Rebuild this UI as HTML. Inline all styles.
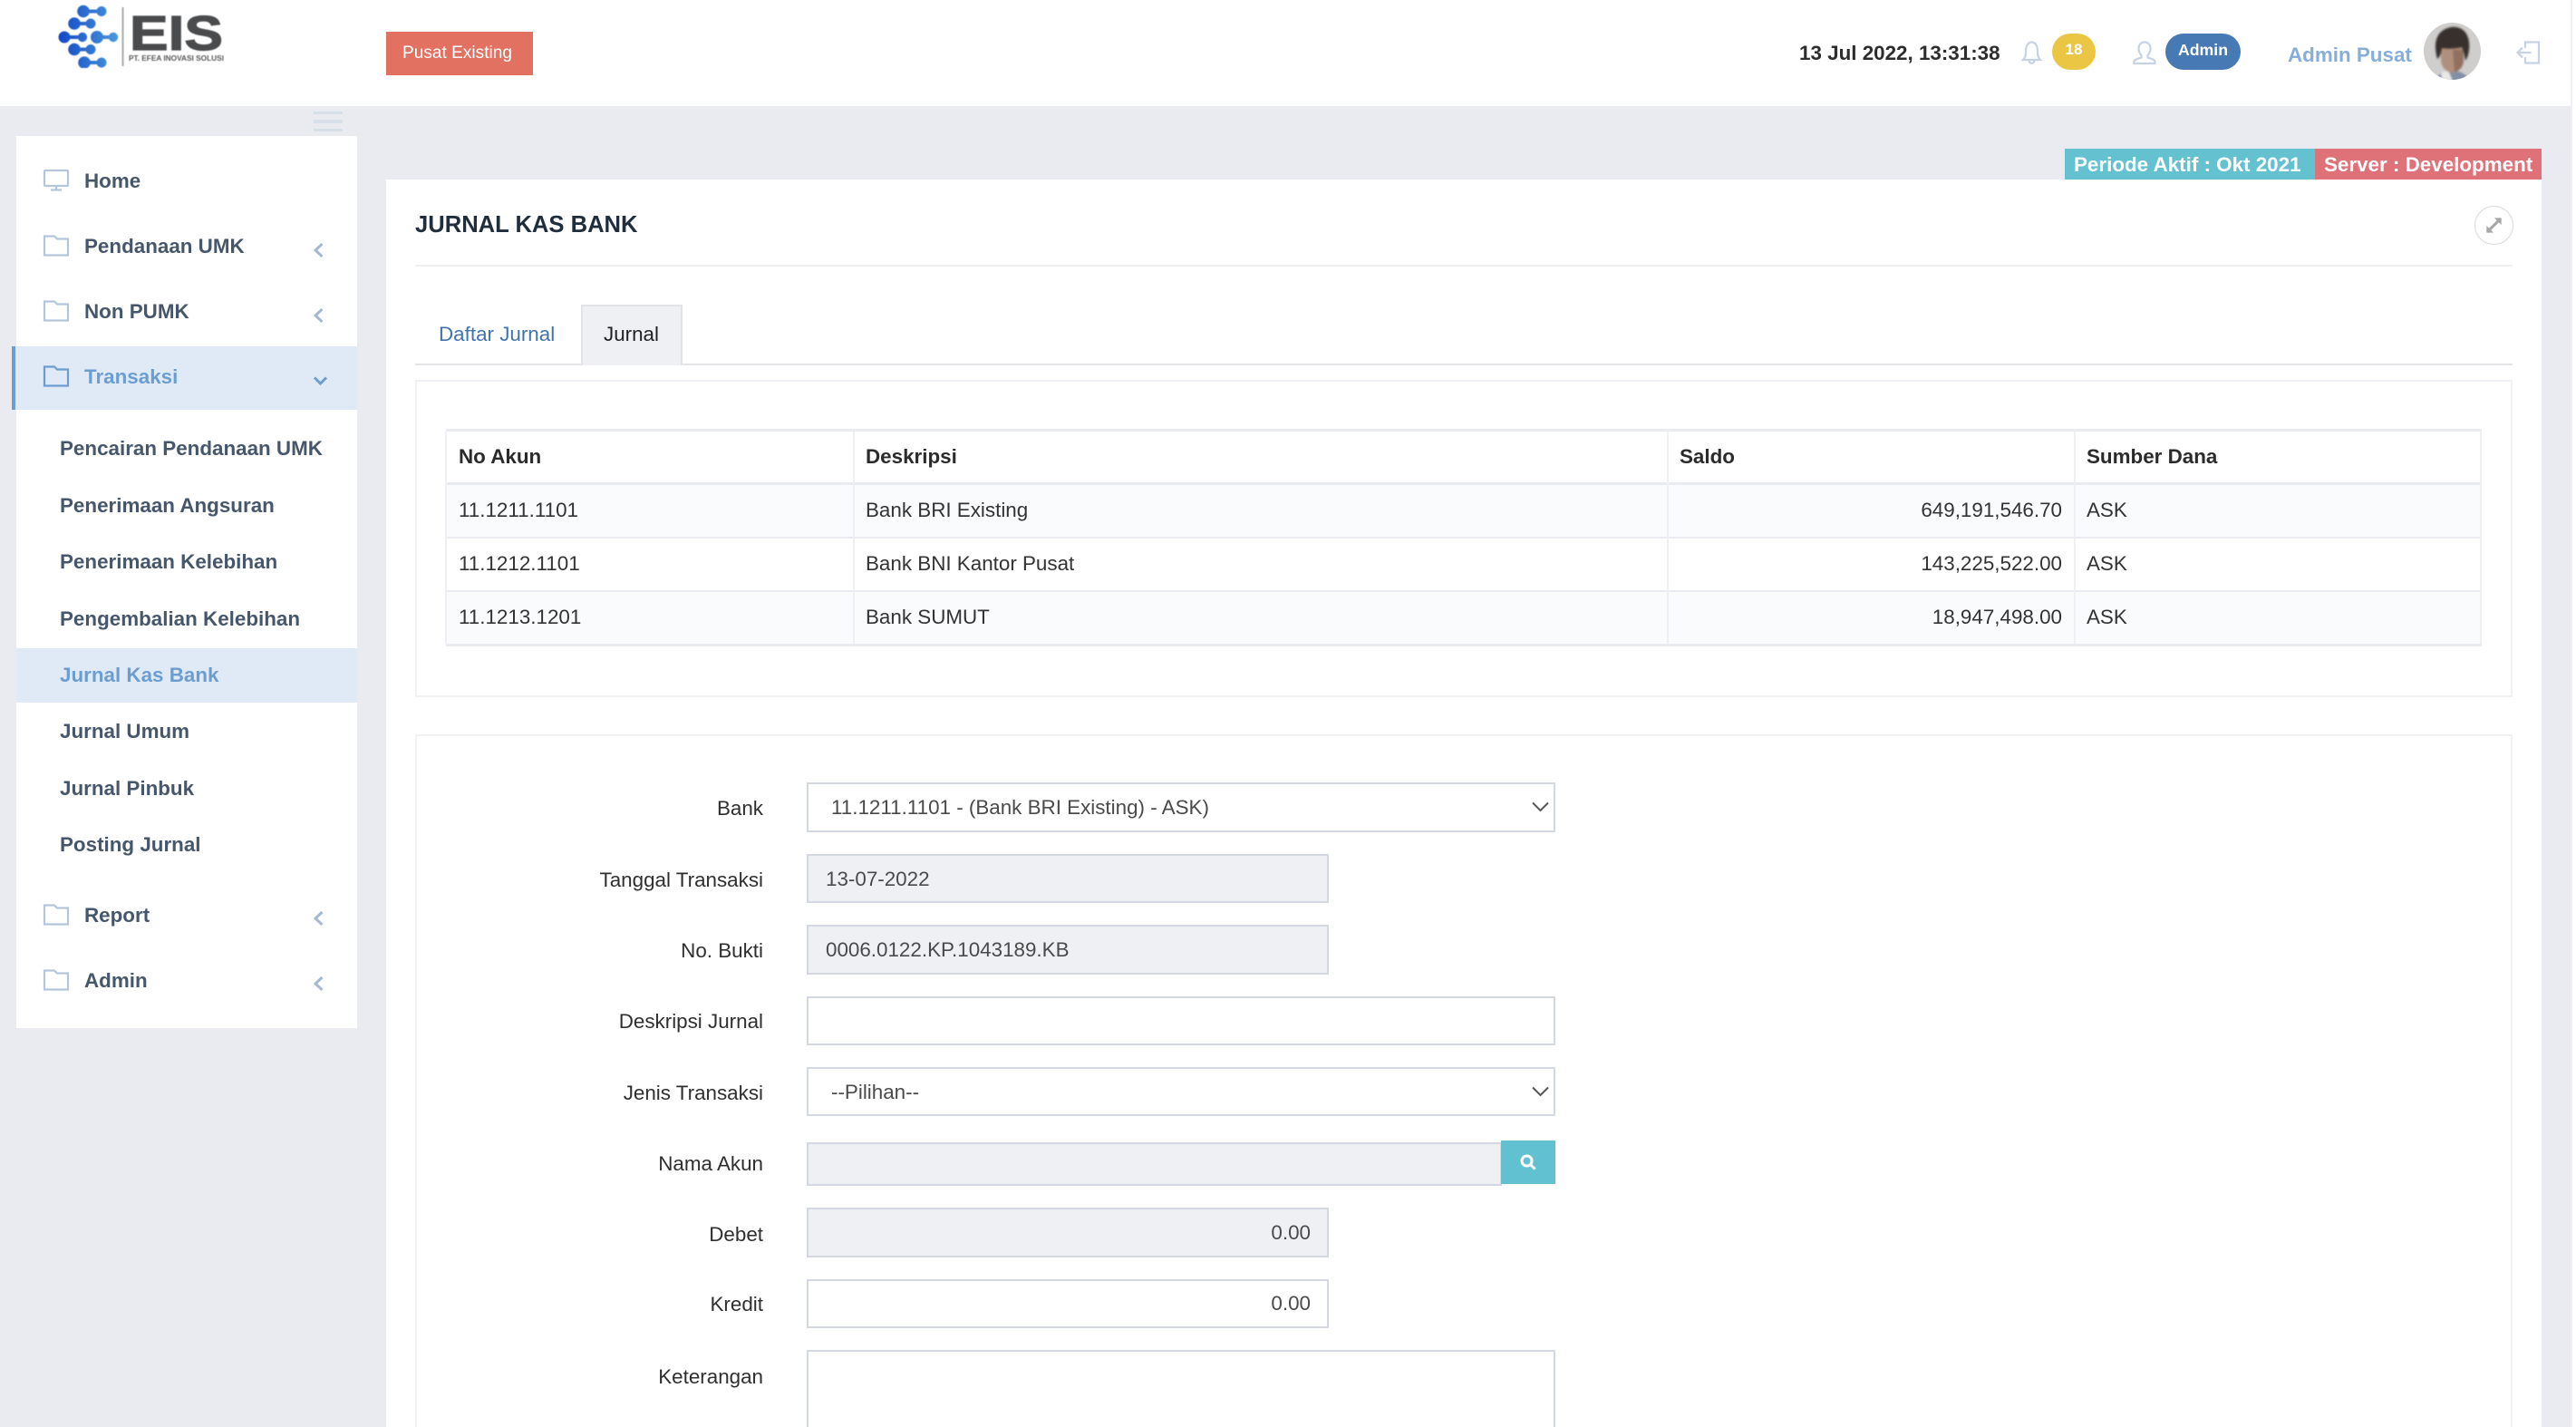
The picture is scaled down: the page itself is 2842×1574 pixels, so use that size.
<!DOCTYPE html>
<html lang="id"><head><meta charset="utf-8"><title>Jurnal Kas Bank</title>
<style>
*{box-sizing:border-box}
html,body{margin:0;padding:0;width:2842px;height:1574px;overflow:hidden}
body{background:#fff;position:relative;font-family:"Liberation Sans",Arial,sans-serif;font-size:22.4px;color:#333}
#root{position:absolute;left:0;top:0;width:2842px;height:1574px;overflow:hidden}
.a{position:absolute}
.t{position:absolute;white-space:nowrap;line-height:30px;height:30px;margin-top:1px}
.b{font-weight:700}
.m{color:#47576b;font-weight:700}
.l{color:#2f2f2f;text-align:right;right:2000px}
.f{position:absolute;left:890px;border:2px solid #d3d8e2;background:#fff}
.ro{background:#eff0f4}
.v{color:#4a4a4a}
svg{position:absolute;overflow:visible}
.ic{fill:none;stroke:#c5d3e4;stroke-width:2.2}
.mi{fill:none;stroke:#b5c6da;stroke-width:2.2}
.ch{fill:none;stroke:#a5bad2;stroke-width:3}
.hl{position:absolute;background:#e9ebf0}
.vl{position:absolute;background:#eef0f4;width:2px;top:475px;height:235px}
</style></head><body><div id="root">

<!-- page background and header -->
<div class="a" style="left:0;top:117px;width:2836px;height:1457px;background:#e9ebf0"></div>
<div class="a" style="left:0;top:0;width:2836px;height:117px;background:#fff"></div>
<div class="a" style="left:2836px;top:0;width:2px;height:1574px;background:#f0f0f3"></div>

<!-- logo -->
<svg style="left:0;top:0;filter:blur(.5px)" width="260" height="80" viewBox="0 0 260 80">
<defs>
<linearGradient id="g" gradientUnits="userSpaceOnUse" x1="65" y1="0" x2="132" y2="0"><stop offset="0" stop-color="#1448c6"/><stop offset="1" stop-color="#4b9bdb"/></linearGradient>
<clipPath id="c"><rect x="60" y="5" width="75" height="70"/></clipPath>
</defs>
<g clip-path="url(#c)" fill="url(#g)" stroke="none">
<circle cx="92" cy="12.5" r="6.800"/><rect x="92" y="10.500" width="20" height="4"/><circle cx="112" cy="12.5" r="5.500"/>
<circle cx="82" cy="26" r="6.800"/><rect x="82" y="24" width="18" height="4"/><circle cx="100" cy="26" r="5.500"/>
<circle cx="71" cy="41" r="6.500"/><rect x="71" y="39" width="20" height="4"/><circle cx="91" cy="41" r="5.200"/>
<circle cx="107" cy="41" r="7"/><rect x="107" y="39" width="18" height="4"/><circle cx="125" cy="41" r="5.200"/>
<circle cx="82" cy="54.500" r="6.800"/><rect x="82" y="52.500" width="18" height="4"/><circle cx="100" cy="54.500" r="5.500"/>
<circle cx="93" cy="69" r="6.800"/><rect x="93" y="67" width="19" height="4"/><circle cx="112" cy="69" r="5.500"/>
</g>
<rect x="134.500" y="8" width="2" height="65" fill="#a9a9a9"/>
<text x="143" y="55" font-family="Liberation Sans" font-weight="700" font-size="54" fill="#4a4b4d" stroke="#4a4b4d" stroke-width="1.200" textLength="103" lengthAdjust="spacingAndGlyphs">EIS</text>
<text x="142" y="67" font-family="Liberation Sans" font-weight="700" font-size="7.800" fill="#55565a" textLength="105" lengthAdjust="spacingAndGlyphs">PT. EFEA INOVASI SOLUSI</text>
</svg>

<div class="a" style="left:426px;top:35px;width:162px;height:48px;background:#e27161"></div>
<div class="t" style="left:444px;top:43px;color:#fff;font-size:19.100px">Pusat Existing</div>

<div class="t b" style="left:1985px;top:43px;color:#2d2d2d">13 Jul 2022, 13:31:38</div>

<!-- bell -->
<svg class="ic" style="left:2230px;top:45px" width="24" height="26" viewBox="0 0 24 26"><path d="M2 21c2.500-2.500 3-5 3-9C5 5.500 7.500 1.500 11.500 1.500S18 5.500 18 12c0 4 .5 6.500 3 9zM8.500 21.500c0 2 1.300 3.300 3 3.300s3-1.300 3-3.300"/></svg>
<div class="a" style="left:2264px;top:37px;width:48px;height:40px;background:#ebc645;border-radius:20px"></div>
<div class="t b" style="left:2264px;width:48px;text-align:center;top:39px;color:#fff;font-size:17px">18</div>

<!-- user -->
<svg class="ic" style="left:2353px;top:45px" width="26" height="26" viewBox="0 0 26 26"><path d="M13 1.500c-4 0-6.500 3-6.500 7 0 3.500 1.500 6 3 7.500v2.500c-3.500 1.500-8 2-8 4.500v2h23v-2c0-2.500-4.500-3-8-4.500V16c1.500-1.500 3-4 3-7.500 0-4-2.500-7-6.500-7z"/></svg>
<div class="a" style="left:2389px;top:37px;width:83px;height:40px;background:#4779b4;border-radius:20px"></div>
<div class="t b" style="left:2389px;width:83px;text-align:center;top:39px;color:#fff;font-size:17.700px">Admin</div>

<div class="t b" style="left:2524px;top:45px;color:#86aed9">Admin Pusat</div>

<!-- avatar -->
<svg style="left:2674px;top:25px" width="64" height="64" viewBox="0 0 64 64">
<defs><clipPath id="av"><circle cx="31.500" cy="31.500" r="31.500"/></clipPath></defs>
<g clip-path="url(#av)">
<rect width="64" height="64" fill="#cfcecc"/>
<g style="filter:blur(1px)">
<path d="M13 66c1-9 9-13 18-13s18 4 20 13z" fill="#838fa5"/>
<path d="M19 55l8-3 5 12h-12z" fill="#e9e7e6"/>
<path d="M19 27h25v14c0 8-6 14-12.500 14S19 49 19 41z" fill="#b0907d"/>
<path d="M32 30h12v12c0 6-5 12-10 12z" fill="#7d5c4d" opacity=".6"/>
<path d="M15 40C10 22 14 8 30 5c14-2 22 9 20 25-1 8-3 10-4 12-1-6-2-12-4-15-8 2-16 2-22 1-1 6-2 10-5 12z" fill="#37302c"/>
</g>
</g></svg>

<!-- logout -->
<svg class="ic" style="left:2776px;top:45px" width="26" height="26" viewBox="0 0 26 26"><path d="M10 8V1.500h15v23H10V18M1.500 13h15M7 7.500 1.500 13 7 18.500"/></svg>

<!-- hamburger -->
<div class="a" style="left:346px;top:123px;width:32px;height:3px;background:#d7dfe9"></div>
<div class="a" style="left:346px;top:132px;width:32px;height:4px;background:#d7dfe9"></div>
<div class="a" style="left:346px;top:142px;width:32px;height:3px;background:#d7dfe9"></div>

<!-- sidebar -->
<div class="a" style="left:18px;top:150px;width:376px;height:984px;background:#fff"></div>
<div class="a" style="left:17px;top:382px;width:377px;height:70px;background:#e0e9f6"></div>
<div class="a" style="left:13px;top:382px;width:4px;height:70px;background:#6b9dd1"></div>
<div class="a" style="left:18px;top:715px;width:376px;height:60px;background:#e0e9f6"></div>

<svg class="mi" style="left:48px;top:187px" width="28" height="24" viewBox="0 0 28 24"><rect x="1" y="1" width="26" height="17" rx="1"/><path d="M14 18v4M8 22.500h12"/></svg>
<div class="t m" style="left:93px;top:184px">Home</div>

<svg class="mi" style="left:48px;top:259px" width="28" height="24" viewBox="0 0 28 24"><path d="M1 22V1.500h11l3 3h12V22.500H1z"/></svg>
<div class="t m" style="left:93px;top:256px">Pendanaan UMK</div>
<svg class="ch" style="left:346px;top:268px" width="11" height="16" viewBox="0 0 11 16"><path d="M9.500 1 2 8l7.500 7"/></svg>

<svg class="mi" style="left:48px;top:331px" width="28" height="24" viewBox="0 0 28 24"><path d="M1 22V1.500h11l3 3h12V22.500H1z"/></svg>
<div class="t m" style="left:93px;top:328px">Non PUMK</div>
<svg class="ch" style="left:346px;top:340px" width="11" height="16" viewBox="0 0 11 16"><path d="M9.500 1 2 8l7.500 7"/></svg>

<svg style="left:48px;top:403px;fill:none;stroke:#6b9dd1;stroke-width:2.200" width="28" height="24" viewBox="0 0 28 24"><path d="M1 22V1.500h11l3 3h12V22.500H1z"/></svg>
<div class="t b" style="left:93px;top:400px;color:#6b9dd1">Transaksi</div>
<svg style="left:346px;top:415px;fill:none;stroke:#6b9dd1;stroke-width:3" width="15" height="10" viewBox="0 0 15 10"><path d="M1 1.500 7.500 8 14 1.500"/></svg>

<div class="t m" style="left:66px;top:479px">Pencairan Pendanaan UMK</div>
<div class="t m" style="left:66px;top:542px">Penerimaan Angsuran</div>
<div class="t m" style="left:66px;top:604px">Penerimaan Kelebihan</div>
<div class="t m" style="left:66px;top:667px">Pengembalian Kelebihan</div>
<div class="t b" style="left:66px;top:729px;color:#6b9dd1">Jurnal Kas Bank</div>
<div class="t m" style="left:66px;top:791px">Jurnal Umum</div>
<div class="t m" style="left:66px;top:854px">Jurnal Pinbuk</div>
<div class="t m" style="left:66px;top:916px">Posting Jurnal</div>

<svg class="mi" style="left:48px;top:997px" width="28" height="24" viewBox="0 0 28 24"><path d="M1 22V1.500h11l3 3h12V22.500H1z"/></svg>
<div class="t m" style="left:93px;top:994px">Report</div>
<svg class="ch" style="left:346px;top:1005px" width="11" height="16" viewBox="0 0 11 16"><path d="M9.500 1 2 8l7.500 7"/></svg>

<svg class="mi" style="left:48px;top:1069px" width="28" height="24" viewBox="0 0 28 24"><path d="M1 22V1.500h11l3 3h12V22.500H1z"/></svg>
<div class="t m" style="left:93px;top:1066px">Admin</div>
<svg class="ch" style="left:346px;top:1077px" width="11" height="16" viewBox="0 0 11 16"><path d="M9.500 1 2 8l7.500 7"/></svg>

<!-- main card -->
<div class="a" style="left:426px;top:198px;width:2378px;height:1376px;background:#fff"></div>
<div class="a" style="left:2278px;top:164px;width:276px;height:34px;background:#64c2d0"></div>
<div class="a" style="left:2554px;top:164px;width:250px;height:34px;background:#de7278"></div>
<div class="t b" style="left:2288px;top:166px;color:#fff">Periode Aktif : Okt 2021</div>
<div class="t b" style="left:2564px;top:166px;color:#fff">Server : Development</div>

<div class="t b" style="left:458px;top:232px;color:#1f2d3d;font-size:25.600px">JURNAL KAS BANK</div>
<div class="a" style="left:2730px;top:227px;width:43px;height:43px;border:1.500px solid #d9d9d9;border-radius:50%"></div>
<svg style="left:2741px;top:238px" width="21" height="21" viewBox="0 0 27 27"><path d="M4 23 23 4" stroke="#a8a8a8" stroke-width="4" fill="none"/><path d="M14 3h10v10zM13 24H3V14z" fill="#a8a8a8"/></svg>
<div class="a" style="left:458px;top:292px;width:2314px;height:2px;background:#eef0f3"></div>

<!-- tabs -->
<div class="a" style="left:458px;top:401px;width:2314px;height:2px;background:#e3e5ea"></div>
<div class="a" style="left:641px;top:336px;width:112px;height:67px;background:#eff0f4;border:2px solid #e1e3e8;border-bottom:0"></div>
<div class="t" style="left:484px;top:353px;color:#3f74b0">Daftar Jurnal</div>
<div class="t" style="left:666px;top:353px;color:#222">Jurnal</div>

<!-- panel 1 -->
<div class="a" style="left:458px;top:419px;width:2314px;height:350px;border:2px solid #f0f1f4"></div>
<div class="a" style="left:492px;top:534px;width:2246px;height:58px;background:#fafbfd"></div>
<div class="a" style="left:492px;top:652px;width:2246px;height:58px;background:#fafbfd"></div>
<div class="hl" style="left:492px;top:473px;width:2246px;height:3px"></div>
<div class="hl" style="left:492px;top:532px;width:2246px;height:3px"></div>
<div class="hl" style="left:492px;top:592px;width:2246px;height:2px"></div>
<div class="hl" style="left:492px;top:651px;width:2246px;height:2px"></div>
<div class="hl" style="left:492px;top:710px;width:2246px;height:3px"></div>
<div class="vl" style="left:491px"></div><div class="vl" style="left:941px"></div><div class="vl" style="left:1839px"></div><div class="vl" style="left:2288px"></div><div class="vl" style="left:2736px"></div>

<div class="t b" style="left:506px;top:488px;color:#2b2b2b">No Akun</div>
<div class="t b" style="left:955px;top:488px;color:#2b2b2b">Deskripsi</div>
<div class="t b" style="left:1853px;top:488px;color:#2b2b2b">Saldo</div>
<div class="t b" style="left:2302px;top:488px;color:#2b2b2b">Sumber Dana</div>

<div class="t" style="left:506px;top:547px">11.1211.1101</div>
<div class="t" style="left:955px;top:547px">Bank BRI Existing</div>
<div class="t" style="right:567px;top:547px">649,191,546.70</div>
<div class="t" style="left:2302px;top:547px">ASK</div>
<div class="t" style="left:506px;top:606px">11.1212.1101</div>
<div class="t" style="left:955px;top:606px">Bank BNI Kantor Pusat</div>
<div class="t" style="right:567px;top:606px">143,225,522.00</div>
<div class="t" style="left:2302px;top:606px">ASK</div>
<div class="t" style="left:506px;top:665px">11.1213.1201</div>
<div class="t" style="left:955px;top:665px">Bank SUMUT</div>
<div class="t" style="right:567px;top:665px">18,947,498.00</div>
<div class="t" style="left:2302px;top:665px">ASK</div>

<!-- panel 2 -->
<div class="a" style="left:458px;top:810px;width:2314px;height:764px;border:2px solid #f0f1f4;border-bottom:0"></div>

<div class="t l" style="top:876px">Bank</div>
<div class="f" style="top:863px;width:826px;height:55px"></div>
<div class="t v" style="left:917px;top:875px">11.1211.1101 - (Bank BRI Existing) - ASK)</div>
<svg style="left:1690px;top:884px;fill:none;stroke:#555;stroke-width:2" width="19" height="12" viewBox="0 0 19 12"><path d="M1 1.500 9.500 10 18 1.500"/></svg>

<div class="t l" style="top:955px">Tanggal Transaksi</div>
<div class="f ro" style="top:942px;width:576px;height:54px"></div>
<div class="t v" style="left:911px;top:954px">13-07-2022</div>

<div class="t l" style="top:1033px">No. Bukti</div>
<div class="f ro" style="top:1020px;width:576px;height:55px"></div>
<div class="t v" style="left:911px;top:1032px">0006.0122.KP.1043189.KB</div>

<div class="t l" style="top:1111px">Deskripsi Jurnal</div>
<div class="f" style="top:1099px;width:826px;height:54px"></div>

<div class="t l" style="top:1190px">Jenis Transaksi</div>
<div class="f" style="top:1177px;width:826px;height:54px"></div>
<div class="t v" style="left:917px;top:1189px">--Pilihan--</div>
<svg style="left:1690px;top:1198px;fill:none;stroke:#555;stroke-width:2" width="19" height="12" viewBox="0 0 19 12"><path d="M1 1.500 9.500 10 18 1.500"/></svg>

<div class="t l" style="top:1268px">Nama Akun</div>
<div class="f ro" style="top:1260px;width:767px;height:48px"></div>
<div class="a" style="left:1656px;top:1258px;width:60px;height:48px;background:#62c1d0"></div>
<svg style="left:1677px;top:1273px;fill:none;stroke:#fff;stroke-width:3" width="18" height="18" viewBox="0 0 18 18"><circle cx="7.500" cy="7.500" r="5.500"/><path d="M11.500 11.500 16.500 16.500"/></svg>

<div class="t l" style="top:1346px">Debet</div>
<div class="f ro" style="top:1332px;width:576px;height:55px"></div>
<div class="t v" style="right:1396px;top:1344px">0.00</div>

<div class="t l" style="top:1423px">Kredit</div>
<div class="f" style="top:1411px;width:576px;height:54px"></div>
<div class="t v" style="right:1396px;top:1422px">0.00</div>

<div class="t l" style="top:1503px">Keterangan</div>
<div class="f" style="top:1489px;width:826px;height:85px;border-bottom:0"></div>

</div></body></html>
